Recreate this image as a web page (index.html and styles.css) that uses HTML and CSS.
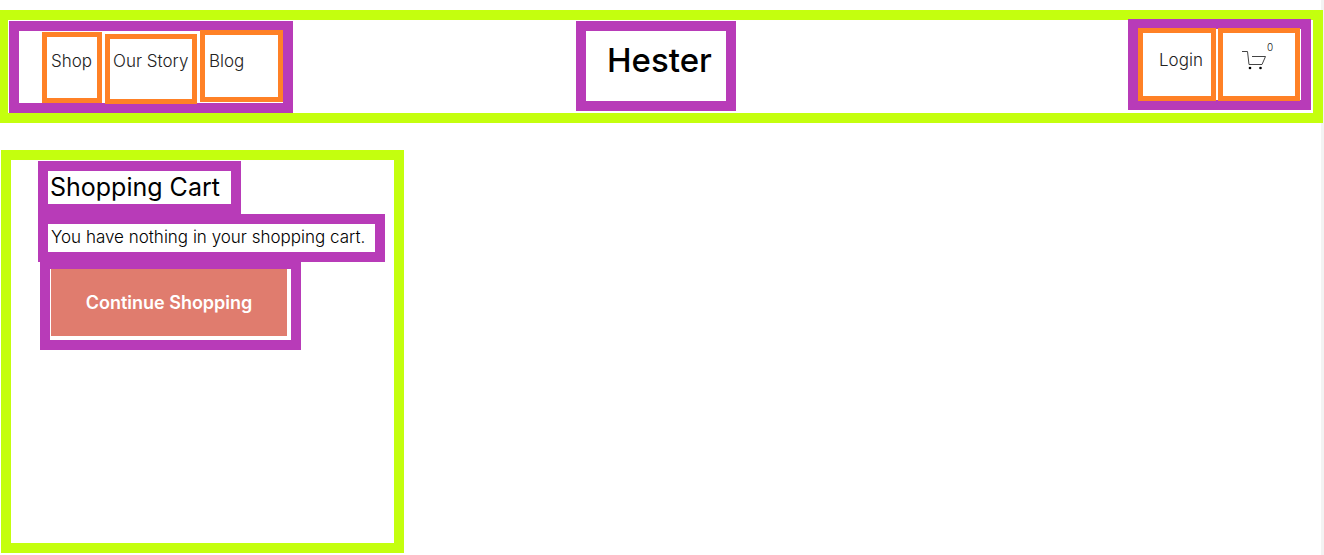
FILE: index.html
```html
<!DOCTYPE html>
<html lang="en">
<head>
<meta charset="utf-8">
<meta name="viewport" content="width=device-width, initial-scale=1">
<title>Hester – Shopping Cart</title>
<link rel="stylesheet" href="styles.css">
</head>
<body>
<header class="site-header">
  <nav class="group main-nav" aria-label="Main">
    <a class="item shop" href="#shop">Shop</a>
    <a class="item story" href="#story">Our Story</a>
    <a class="item blog" href="#blog">Blog</a>
  </nav>
  <a class="group brand" href="#home">Hester</a>
  <div class="group account">
    <a class="item login" href="#login">Login</a>
    <a class="item cart" href="#cart" aria-label="Cart, 0 items">
      <svg class="cart-icon" width="25" height="20" viewBox="0 0 25 20" fill="none" stroke="#444" aria-hidden="true">
        <path d="M0 .5H5.5L7 13.5H20L23.5 5.5H10"/>
        <circle cx="8" cy="17" r="1.3" fill="#000" stroke="none"/>
        <circle cx="18.5" cy="17" r="1.3" fill="#000" stroke="none"/>
      </svg>
      <span class="count">0</span>
    </a>
  </div>
</header>
<main class="cart-panel">
  <h1 class="group title">Shopping Cart</h1>
  <p class="group message">You have nothing in your shopping cart.</p>
  <div class="group action">
    <button class="continue" type="button">Continue Shopping</button>
  </div>
</main>
</body>
</html>
```
FILE: styles.css
```css
* { box-sizing: border-box; }

html { min-height: 100%; }

body {
  margin: 0;
  padding-top: 10px;
  min-height: 100vh;
  background: linear-gradient(#f3f3f3, #f3f3f3) right / 3px 100% no-repeat #fff;
  color: #000;
  font-family: Inter, "Liberation Sans", sans-serif;
}

a { color: inherit; text-decoration: none; }

.group { border: 10px solid #b83bb8; }

.item {
  margin: -1px 0;
  border: 5px solid #ff8126;
  color: #222;
  font-size: 17px;
  font-weight: 300;
  line-height: 24px;
}

.site-header {
  display: grid;
  grid-template-columns: 1fr auto 1fr;
  align-items: start;
  margin-right: 1px;
  padding: 0 2px 0 1px;
  border: 10px solid #c4ff0e;
  border-left-width: 8px;
}

.main-nav {
  display: flex;
  align-items: baseline;
  justify-self: start;
  gap: 3px;
  margin-top: 1px;
  height: 92px;
  padding: 0 0 0 23px;
}

.shop { width: 60px; height: 71px; padding: 12px 0 0 4px; }
.story { width: 92px; height: 70px; padding: 10px 0 0 3px; }
.blog { width: 83px; height: 72px; padding: 14px 0 0 4px; }

.brand {
  width: 160px;
  height: 90px;
  margin: 1px 8px 0 0;
  padding: 8px 0 0 21px;
  font-size: 33px;
  font-weight: 500;
  line-height: 42px;
}

.account {
  display: flex;
  justify-self: end;
  gap: 2px;
  width: 183px;
  height: 91px;
  margin-top: -1px;
  padding-right: 1px;
}

.login { width: 78px; padding: 15px 0 0 16px; }

.cart {
  display: flex;
  flex: 1;
  align-items: flex-start;
  padding: 8px 0 0 19px;
}

.cart-icon { margin-top: 10px; }

.count { font-size: 10px; line-height: 12px; }

.cart-panel {
  display: flex;
  flex-direction: column;
  align-items: flex-start;
  max-width: 403px;
  min-height: 403px;
  margin: 27px 1px 0;
  padding: 1px 0 0 27px;
  border: 10px solid #c4ff0e;
}

.title {
  width: 203px;
  margin: 0;
  padding: 0 0 1px 2px;
  font-size: 25px;
  font-weight: 400;
  line-height: 32px;
  white-space: nowrap;
}

.message {
  width: 347px;
  margin: 0;
  padding: 0 0 2px 3px;
  font-size: 17px;
  font-weight: 300;
  line-height: 26px;
  white-space: nowrap;
}

.action {
  margin: -3px 0 0 2px;
  padding: 0 4px 4px 1px;
}

.continue {
  display: block;
  width: 236px;
  height: 67px;
  border: 0;
  background: #e07c6e;
  color: #fff;
  font: 600 18px/24px Inter, "Liberation Sans", sans-serif;
}
```
